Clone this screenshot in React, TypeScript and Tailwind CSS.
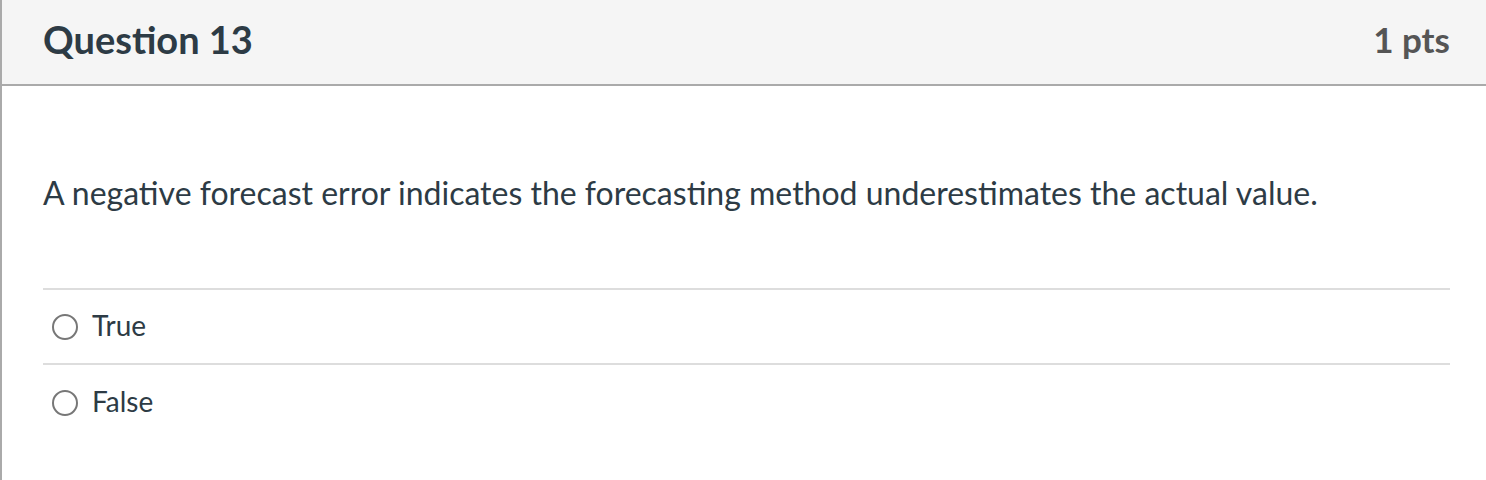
export default function App() {
  const answers = ['True', 'False'];
  return (
    <div className="h-[480px] w-[1486px] overflow-hidden bg-white font-['Lato',sans-serif] text-[#2d3b45]">
      <div className="h-full border-l-2 border-[#aaaaaa]">
        <div className="flex h-[86px] items-center justify-between border-b-2 border-[#aaaaaa] bg-[#f5f5f5] pl-[41px] pr-[36px]">
          <h2 className="pb-[6px] text-[38px] font-bold leading-none">Question 13</h2>
          <div className="pb-[6px] text-[35px] font-bold leading-none text-[#555555]">1 pts</div>
        </div>
        <div className="pl-[41px] pr-[36px]">
          <p className="pt-[87px] text-[32px] leading-[40px]">
            A negative forecast error indicates the forecasting method underestimates the actual value.
          </p>
          <div className="mt-[75px] border-t-2 border-[#dddddd]">
            {answers.map((a, i) => (
              <label
                key={a}
                className={`flex h-[75px] items-center gap-[14px] pl-[9px] ${i === 0 ? 'border-b-2 border-[#dddddd]' : ''}`}
              >
                <span className="h-[26px] w-[26px] rounded-full border-2 border-[#777777] bg-white" />
                <span className="pb-[3px] text-[28px] leading-none">{a}</span>
              </label>
            ))}
          </div>
        </div>
      </div>
    </div>
  );
}
